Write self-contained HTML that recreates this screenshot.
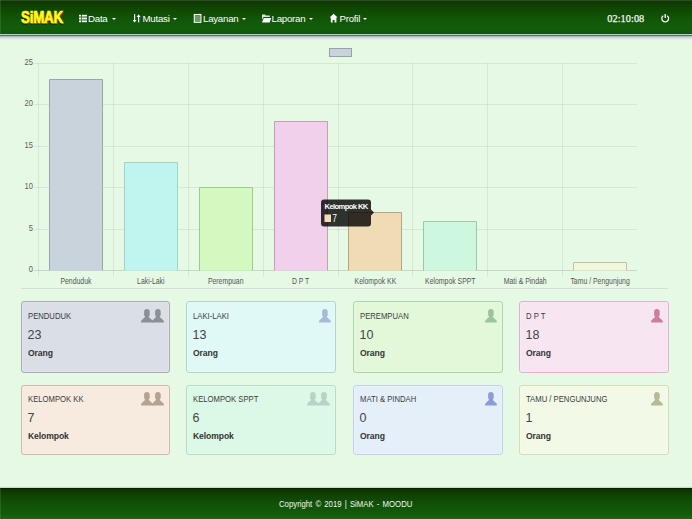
<!DOCTYPE html>
<html><head><meta charset="utf-8">
<style>
*{margin:0;padding:0;box-sizing:border-box}
html,body{width:692px;height:519px;overflow:hidden}
body{background:#e5f9e5;font-family:"Liberation Sans",sans-serif;position:relative}
svg text{font-family:"Liberation Sans",sans-serif}
.nav{position:absolute;left:0;top:0;width:692px;height:34px;background:linear-gradient(#0f3800 0px,#104a04 10px,#115808 20px,#125c0a 27px,#115a09 32px,#045000 33px,#045000 34px);border-top:1px solid #2c4a24}
.navline1{position:absolute;left:0;top:34px;width:692px;height:1px;background:#c6c9cd}
.navline2{position:absolute;left:0;top:35px;width:692px;height:1px;background:#5f6780}
.navsh{position:absolute;left:0;top:36px;width:692px;height:4px;background:linear-gradient(rgba(70,80,100,0.42),rgba(70,80,100,0.12) 50%,rgba(70,80,100,0))}
.logo{position:absolute;left:21px;top:9px;-webkit-text-stroke:0.7px #ffff1a;font-weight:bold;font-size:16px;color:#ffff1a;text-shadow:1px 0.5px 0 #e02a00,0 1.5px 1px rgba(0,0,0,.45);transform:scaleX(0.83);transform-origin:0 0;letter-spacing:-0.2px}
.ni{position:absolute;top:12.9px;color:#fff;font-size:9.7px;letter-spacing:-0.25px;white-space:nowrap}
.caret{position:absolute;top:18px;width:0;height:0;border-left:2px solid transparent;border-right:2px solid transparent;border-top:2px solid #fff}
.clock{position:absolute;left:607.3px;top:13px;color:#f4f8f2;font-family:"Liberation Serif",serif;font-size:10.3px;-webkit-text-stroke:0.25px #f4f8f2;letter-spacing:0.05px}
.hr{position:absolute;left:21px;top:288px;width:647px;height:1px;background:#d5ddd5}
.card{position:absolute;width:150px;border:1px solid;border-radius:3px;box-shadow:inset 0 0 0 1px rgba(255,255,255,0.22)}
.ct{position:absolute;left:5.5px;top:9px;font-size:9.4px;color:#3c3c3c;letter-spacing:0;white-space:nowrap;transform:scaleX(0.82);transform-origin:0 0}
.cn{position:absolute;left:5.5px;top:26px;font-size:12.5px;color:#444}
.cu{position:absolute;left:6px;top:47px;font-size:8.6px;font-weight:bold;color:#333;letter-spacing:-0.1px}
.foot{position:absolute;left:0;top:488px;width:692px;height:31px;background:linear-gradient(#0a3000 0px,#0f3c00 3px,#115007 14px,#125c0a 26px,#1e6a18 31px);border-top:1px solid #062400;box-shadow:0 -1px 1px rgba(0,0,0,0.12)}
.foottxt{position:absolute;left:0;top:498.5px;width:692px;text-align:center;color:#f2f6f0;font-size:9.2px;word-spacing:1.2px;transform:scaleX(0.845);transform-origin:344px 0}
</style></head><body>
<div class="nav"></div><div class="navline1"></div><div class="navline2"></div><div class="navsh"></div>
<div class="logo">SiMAK</div>
<div class="ni" style="left:88px">Data</div><div class="caret" style="left:112px"></div>
<div class="ni" style="left:142.5px">Mutasi</div><div class="caret" style="left:173px"></div>
<div class="ni" style="left:203px">Layanan</div><div class="caret" style="left:241.5px"></div>
<div class="ni" style="left:271.5px">Laporan</div><div class="caret" style="left:309px"></div>
<div class="ni" style="left:339.5px">Profil</div><div class="caret" style="left:363px"></div>
<svg class="icons" width="692" height="34" viewBox="0 0 692 34" style="position:absolute;left:0;top:0">
<g fill="#fff">
<rect x="79" y="14.8" width="2.2" height="1.6"/><rect x="82" y="14.8" width="5" height="1.6"/>
<rect x="79" y="17.7" width="2.2" height="1.6"/><rect x="82" y="17.7" width="5" height="1.6"/>
<rect x="79" y="20.6" width="2.2" height="1.6"/><rect x="82" y="20.6" width="5" height="1.6"/>
<rect x="79" y="16.4" width="8" height="1.3" fill-opacity=".35"/><rect x="79" y="19.3" width="8" height="1.3" fill-opacity=".35"/>
<rect x="134" y="14.2" width="1.2" height="6.5"/><path d="M132.6 20h4l-2 2.5z"/>
<rect x="138" y="16.2" width="1.2" height="6.2"/><path d="M136.6 17h4l-2-2.7z"/>
<rect x="194.3" y="14.5" width="6.6" height="7.8" fill="none" stroke="#fff" stroke-width="1.1"/>
<rect x="195" y="15.2" width="5.2" height="6.4" fill-opacity=".4"/>
<path d="M262 14.6h3l.8.9h4v1.6h-6.3l-1.5 2.6z" fill-opacity=".85"/><path d="M263.8 18h7.4l-1.6 4.5h-7.6z"/>
<path d="M333.6 13.8l4 3.8h-1.2v4.8h-1.8v-2.4h-2v2.4h-1.8v-4.8h-1.2z"/>
</g>
<g fill="none" stroke="#f4f8f2" stroke-width="1.35"><path d="M667.15 15.71A3.4 3.4 0 1 1 663.25 15.71"/><path d="M665.2 14.1V18"/></g>
</svg>
<div class="clock">02:10:08</div>
<svg width="692" height="292" viewBox="0 0 692 292" style="position:absolute;left:0;top:0">
<line x1="34" y1="270.5" x2="637" y2="270.5" stroke="rgba(0,0,0,0.13)" stroke-width="1"/>
<text transform="translate(33,272.1) scale(0.88,1)" text-anchor="end" font-size="8.6" fill="#606060">0</text>
<line x1="34" y1="229.5" x2="637" y2="229.5" stroke="rgba(0,0,0,0.065)" stroke-width="1"/>
<text transform="translate(33,231.1) scale(0.88,1)" text-anchor="end" font-size="8.6" fill="#606060">5</text>
<line x1="34" y1="187.5" x2="637" y2="187.5" stroke="rgba(0,0,0,0.065)" stroke-width="1"/>
<text transform="translate(33,189.1) scale(0.88,1)" text-anchor="end" font-size="8.6" fill="#606060">10</text>
<line x1="34" y1="146.5" x2="637" y2="146.5" stroke="rgba(0,0,0,0.065)" stroke-width="1"/>
<text transform="translate(33,148.1) scale(0.88,1)" text-anchor="end" font-size="8.6" fill="#606060">15</text>
<line x1="34" y1="104.5" x2="637" y2="104.5" stroke="rgba(0,0,0,0.065)" stroke-width="1"/>
<text transform="translate(33,106.1) scale(0.88,1)" text-anchor="end" font-size="8.6" fill="#606060">20</text>
<line x1="34" y1="63.5" x2="637" y2="63.5" stroke="rgba(0,0,0,0.065)" stroke-width="1"/>
<text transform="translate(33,65.1) scale(0.88,1)" text-anchor="end" font-size="8.6" fill="#606060">25</text>
<line x1="38.5" y1="63" x2="38.5" y2="277" stroke="rgba(0,0,0,0.065)" stroke-width="1"/>
<line x1="113.5" y1="63" x2="113.5" y2="277" stroke="rgba(0,0,0,0.065)" stroke-width="1"/>
<line x1="188.5" y1="63" x2="188.5" y2="277" stroke="rgba(0,0,0,0.065)" stroke-width="1"/>
<line x1="263.5" y1="63" x2="263.5" y2="277" stroke="rgba(0,0,0,0.065)" stroke-width="1"/>
<line x1="338.5" y1="63" x2="338.5" y2="277" stroke="rgba(0,0,0,0.065)" stroke-width="1"/>
<line x1="412.5" y1="63" x2="412.5" y2="277" stroke="rgba(0,0,0,0.065)" stroke-width="1"/>
<line x1="487.5" y1="63" x2="487.5" y2="277" stroke="rgba(0,0,0,0.065)" stroke-width="1"/>
<line x1="562.5" y1="63" x2="562.5" y2="277" stroke="rgba(0,0,0,0.065)" stroke-width="1"/>
<text transform="translate(75.94,283.6) scale(0.82,1)" text-anchor="middle" font-size="8.4" fill="#555">Penduduk</text>
<path d="M49.5 270.5V79.5H102.5V270.5" fill="#c9d3dc" stroke="#9aa4ac" stroke-width="1"/>
<text transform="translate(150.81,283.6) scale(0.82,1)" text-anchor="middle" font-size="8.4" fill="#555">Laki-Laki</text>
<path d="M124.5 270.5V162.5H177.5V270.5" fill="#c0f5ef" stroke="#9fd3cc" stroke-width="1"/>
<text transform="translate(225.69,283.6) scale(0.82,1)" text-anchor="middle" font-size="8.4" fill="#555">Perempuan</text>
<path d="M199.5 270.5V187.5H252.5V270.5" fill="#d3f8c0" stroke="#9ccb8e" stroke-width="1"/>
<text transform="translate(300.56,283.6) scale(0.82,1)" text-anchor="middle" font-size="8.4" fill="#555">D P T</text>
<path d="M274.5 270.5V121.5H327.5V270.5" fill="#f0d0ea" stroke="#c89cbb" stroke-width="1"/>
<text transform="translate(375.44,283.6) scale(0.82,1)" text-anchor="middle" font-size="8.4" fill="#555">Kelompok KK</text>
<path d="M348.5 270.5V212.5H401.5V270.5" fill="#efdbb4" stroke="#b9a482" stroke-width="1"/>
<text transform="translate(450.31,283.6) scale(0.82,1)" text-anchor="middle" font-size="8.4" fill="#555">Kelompok SPPT</text>
<path d="M423.5 270.5V221.5H476.5V270.5" fill="#cdf7de" stroke="#9cc6ad" stroke-width="1"/>
<text transform="translate(525.19,283.6) scale(0.82,1)" text-anchor="middle" font-size="8.4" fill="#555">Mati & Pindah</text>
<text transform="translate(600.06,283.6) scale(0.82,1)" text-anchor="middle" font-size="8.4" fill="#555">Tamu / Pengunjung</text>
<path d="M573.5 270.5V262.5H626.5V270.5" fill="#f1f6dc" stroke="#c2c29a" stroke-width="1"/>
<rect x="329.5" y="48.5" width="22" height="8" fill="#c9d3dc" stroke="#98a0a8" stroke-width="1"/>
<g><path d="M324 199.5h44a3 3 0 0 1 3 3v7l3 3-3 3v8a3 3 0 0 1-3 3h-44a3 3 0 0 1-3-3v-21a3 3 0 0 1 3-3z" fill="rgba(0,0,0,0.8)"/>
<text x="324.5" y="209.2" font-size="7.6" font-weight="bold" fill="#fff" letter-spacing="-0.6">Kelompok KK</text>
<rect x="324.5" y="214.5" width="6.5" height="7.5" fill="#f3ddb9"/>
<text transform="translate(332.3,222.2) scale(0.8,1)" font-size="10.5" fill="#fff">7</text></g>
</svg>
<div class="hr"></div>
<div class="card" style="left:21px;top:301px;width:149px;height:72px;background:#dadfe7;border-color:#a6abb2">
<div class="ct" style="top:7.9px">PENDUDUK</div><div class="cn" style="top:26px">23</div><div class="cu" style="top:46.3px">Orang</div><svg style="position:absolute;left:118.6px;top:7.2px" width="12" height="14" viewBox="0 0 12 14"><path d="M5.9 0C7.6 0 8.7 1 8.7 2.8V5.8C8.7 6.6 8.3 7.1 7.8 7.5V8L11.3 11.2C11.8 11.7 11.9 12.3 11.9 13.5H0C0 12.3.1 11.7.6 11.2L4 8V7.5C3.5 7.1 3.1 6.6 3.1 5.8V2.8C3.1 1 4.2 0 5.9 0Z" fill="#8c9096"/></svg><svg style="position:absolute;left:130.0px;top:7.2px" width="12" height="14" viewBox="0 0 12 14"><path d="M5.9 0C7.6 0 8.7 1 8.7 2.8V5.8C8.7 6.6 8.3 7.1 7.8 7.5V8L11.3 11.2C11.8 11.7 11.9 12.3 11.9 13.5H0C0 12.3.1 11.7.6 11.2L4 8V7.5C3.5 7.1 3.1 6.6 3.1 5.8V2.8C3.1 1 4.2 0 5.9 0Z" fill="#8c9096"/></svg></div>
<div class="card" style="left:186px;top:301px;width:150px;height:72px;background:#e0f9f6;border-color:#b0d4cf">
<div class="ct" style="top:7.9px">LAKI-LAKI</div><div class="cn" style="top:26px">13</div><div class="cu" style="top:46.3px">Orang</div><svg style="position:absolute;left:131.6px;top:7.2px" width="12" height="14" viewBox="0 0 12 14"><path d="M5.9 0C7.6 0 8.7 1 8.7 2.8V5.8C8.7 6.6 8.3 7.1 7.8 7.5V8L11.3 11.2C11.8 11.7 11.9 12.3 11.9 13.5H0C0 12.3.1 11.7.6 11.2L4 8V7.5C3.5 7.1 3.1 6.6 3.1 5.8V2.8C3.1 1 4.2 0 5.9 0Z" fill="#a9b9d6"/></svg></div>
<div class="card" style="left:353px;top:301px;width:150px;height:72px;background:#e2f8d9;border-color:#abd69f">
<div class="ct" style="top:7.9px">PEREMPUAN</div><div class="cn" style="top:26px">10</div><div class="cu" style="top:46.3px">Orang</div><svg style="position:absolute;left:130.8px;top:7.2px" width="12" height="14" viewBox="0 0 12 14"><path d="M5.9 0C7.6 0 8.7 1 8.7 2.8V5.8C8.7 6.6 8.3 7.1 7.8 7.5V8L11.3 11.2C11.8 11.7 11.9 12.3 11.9 13.5H0C0 12.3.1 11.7.6 11.2L4 8V7.5C3.5 7.1 3.1 6.6 3.1 5.8V2.8C3.1 1 4.2 0 5.9 0Z" fill="#9cc39a"/></svg></div>
<div class="card" style="left:519px;top:301px;width:150px;height:72px;background:#f7e5f2;border-color:#dcb3d3">
<div class="ct" style="top:7.9px">D P T</div><div class="cn" style="top:26px">18</div><div class="cu" style="top:46.3px">Orang</div><svg style="position:absolute;left:130.8px;top:7.2px" width="12" height="14" viewBox="0 0 12 14"><path d="M5.9 0C7.6 0 8.7 1 8.7 2.8V5.8C8.7 6.6 8.3 7.1 7.8 7.5V8L11.3 11.2C11.8 11.7 11.9 12.3 11.9 13.5H0C0 12.3.1 11.7.6 11.2L4 8V7.5C3.5 7.1 3.1 6.6 3.1 5.8V2.8C3.1 1 4.2 0 5.9 0Z" fill="#cc7f98"/></svg></div>
<div class="card" style="left:21px;top:385px;width:149px;height:70px;background:#f7eadf;border-color:#d0b9a6">
<div class="ct" style="top:6.6px">KELOMPOK KK</div><div class="cn" style="top:24.8px">7</div><div class="cu" style="top:45.3px">Kelompok</div><svg style="position:absolute;left:118.6px;top:6.0px" width="12" height="14" viewBox="0 0 12 14"><path d="M5.9 0C7.6 0 8.7 1 8.7 2.8V5.8C8.7 6.6 8.3 7.1 7.8 7.5V8L11.3 11.2C11.8 11.7 11.9 12.3 11.9 13.5H0C0 12.3.1 11.7.6 11.2L4 8V7.5C3.5 7.1 3.1 6.6 3.1 5.8V2.8C3.1 1 4.2 0 5.9 0Z" fill="#b4a392"/></svg><svg style="position:absolute;left:130.0px;top:6.0px" width="12" height="14" viewBox="0 0 12 14"><path d="M5.9 0C7.6 0 8.7 1 8.7 2.8V5.8C8.7 6.6 8.3 7.1 7.8 7.5V8L11.3 11.2C11.8 11.7 11.9 12.3 11.9 13.5H0C0 12.3.1 11.7.6 11.2L4 8V7.5C3.5 7.1 3.1 6.6 3.1 5.8V2.8C3.1 1 4.2 0 5.9 0Z" fill="#b4a392"/></svg></div>
<div class="card" style="left:186px;top:385px;width:150px;height:70px;background:#dcf9e8;border-color:#b5dcc6">
<div class="ct" style="top:6.6px">KELOMPOK SPPT</div><div class="cn" style="top:24.8px">6</div><div class="cu" style="top:45.3px">Kelompok</div><svg style="position:absolute;left:120px;top:6.0px" width="12" height="14" viewBox="0 0 12 14"><path d="M5.9 0C7.6 0 8.7 1 8.7 2.8V5.8C8.7 6.6 8.3 7.1 7.8 7.5V8L11.3 11.2C11.8 11.7 11.9 12.3 11.9 13.5H0C0 12.3.1 11.7.6 11.2L4 8V7.5C3.5 7.1 3.1 6.6 3.1 5.8V2.8C3.1 1 4.2 0 5.9 0Z" fill="#b9d2c7"/></svg><svg style="position:absolute;left:131.4px;top:6.0px" width="12" height="14" viewBox="0 0 12 14"><path d="M5.9 0C7.6 0 8.7 1 8.7 2.8V5.8C8.7 6.6 8.3 7.1 7.8 7.5V8L11.3 11.2C11.8 11.7 11.9 12.3 11.9 13.5H0C0 12.3.1 11.7.6 11.2L4 8V7.5C3.5 7.1 3.1 6.6 3.1 5.8V2.8C3.1 1 4.2 0 5.9 0Z" fill="#b9d2c7"/></svg></div>
<div class="card" style="left:353px;top:385px;width:150px;height:70px;background:#e5effa;border-color:#c0d2ea">
<div class="ct" style="top:6.6px">MATI &amp; PINDAH</div><div class="cn" style="top:24.8px">0</div><div class="cu" style="top:45.3px">Orang</div><svg style="position:absolute;left:130.7px;top:6.0px" width="12" height="14" viewBox="0 0 12 14"><path d="M5.9 0C7.6 0 8.7 1 8.7 2.8V5.8C8.7 6.6 8.3 7.1 7.8 7.5V8L11.3 11.2C11.8 11.7 11.9 12.3 11.9 13.5H0C0 12.3.1 11.7.6 11.2L4 8V7.5C3.5 7.1 3.1 6.6 3.1 5.8V2.8C3.1 1 4.2 0 5.9 0Z" fill="#8e9dd1"/></svg></div>
<div class="card" style="left:519px;top:385px;width:150px;height:70px;background:#f2f9e6;border-color:#d5dcb4">
<div class="ct" style="top:6.6px">TAMU / PENGUNJUNG</div><div class="cn" style="top:24.8px">1</div><div class="cu" style="top:45.3px">Orang</div><svg style="position:absolute;left:130.7px;top:6.0px" width="12" height="14" viewBox="0 0 12 14"><path d="M5.9 0C7.6 0 8.7 1 8.7 2.8V5.8C8.7 6.6 8.3 7.1 7.8 7.5V8L11.3 11.2C11.8 11.7 11.9 12.3 11.9 13.5H0C0 12.3.1 11.7.6 11.2L4 8V7.5C3.5 7.1 3.1 6.6 3.1 5.8V2.8C3.1 1 4.2 0 5.9 0Z" fill="#b9b996"/></svg></div>
<div class="foot"></div><div style="position:absolute;left:0;top:0;width:1px;height:34px;background:rgba(255,255,255,0.1)"></div><div style="position:absolute;left:0;top:488px;width:1px;height:31px;background:rgba(255,255,255,0.1)"></div>
<div class="foottxt">Copyright &copy; 2019 | SiMAK - MOODU</div>
</body></html>
